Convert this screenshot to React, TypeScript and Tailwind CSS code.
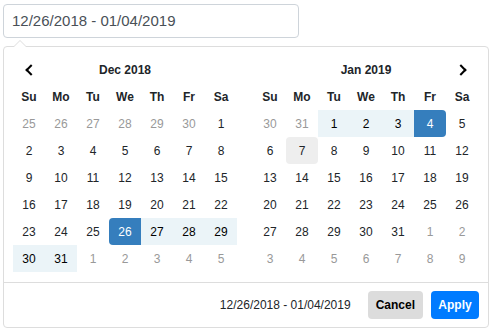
import React from "react";

type Day = { n: number; kind?: "off" | "in" | "start" | "end" | "hover" };

const dec: Day[][] = [
  [{ n: 25, kind: "off" }, { n: 26, kind: "off" }, { n: 27, kind: "off" }, { n: 28, kind: "off" }, { n: 29, kind: "off" }, { n: 30, kind: "off" }, { n: 1 }],
  [2, 3, 4, 5, 6, 7, 8].map((n) => ({ n })),
  [9, 10, 11, 12, 13, 14, 15].map((n) => ({ n })),
  [16, 17, 18, 19, 20, 21, 22].map((n) => ({ n })),
  [{ n: 23 }, { n: 24 }, { n: 25 }, { n: 26, kind: "start" }, { n: 27, kind: "in" }, { n: 28, kind: "in" }, { n: 29, kind: "in" }],
  [{ n: 30, kind: "in" }, { n: 31, kind: "in" }, { n: 1, kind: "off" }, { n: 2, kind: "off" }, { n: 3, kind: "off" }, { n: 4, kind: "off" }, { n: 5, kind: "off" }],
];

const jan: Day[][] = [
  [{ n: 30, kind: "off" }, { n: 31, kind: "off" }, { n: 1, kind: "in" }, { n: 2, kind: "in" }, { n: 3, kind: "in" }, { n: 4, kind: "end" }, { n: 5 }],
  [{ n: 6 }, { n: 7, kind: "hover" }, { n: 8 }, { n: 9 }, { n: 10 }, { n: 11 }, { n: 12 }],
  [13, 14, 15, 16, 17, 18, 19].map((n) => ({ n })),
  [20, 21, 22, 23, 24, 25, 26].map((n) => ({ n })),
  [{ n: 27 }, { n: 28 }, { n: 29 }, { n: 30 }, { n: 31 }, { n: 1, kind: "off" }, { n: 2, kind: "off" }],
  [3, 4, 5, 6, 7, 8, 9].map((n) => ({ n, kind: "off" as const })),
];

const weekdays = ["Su", "Mo", "Tu", "We", "Th", "Fr", "Sa"];

function cellClass(kind?: Day["kind"]) {
  switch (kind) {
    case "off":
      return "text-[#999]";
    case "in":
      return "bg-[#ebf4f8] text-black";
    case "start":
      return "bg-[#357ebd] text-white rounded-l-[4px]";
    case "end":
      return "bg-[#357ebd] text-white rounded-r-[4px]";
    case "hover":
      return "bg-[#eee] text-[#212529] rounded-[4px]";
    default:
      return "text-[#212529]";
  }
}

function Chevron({ dir }: { dir: "left" | "right" }) {
  return (
    <span
      className={
        "inline-block w-[8px] h-[8px] border-black border-r-[2px] border-b-[2px] " +
        (dir === "left" ? "rotate-[135deg] ml-[3px]" : "-rotate-45 mr-[3px]")
      }
    />
  );
}

function Calendar({ title, rows, prev, next }: { title: string; rows: Day[][]; prev?: boolean; next?: boolean }) {
  return (
    <div className="w-[224px]">
      <div className="grid grid-cols-7 h-[27px] items-center text-[12px] font-bold text-[#212529]">
        <div className="flex justify-center">{prev && <Chevron dir="left" />}</div>
        <div className="col-span-5 text-center">{title}</div>
        <div className="flex justify-center">{next && <Chevron dir="right" />}</div>
      </div>
      <div className="grid grid-cols-7 h-[27px] items-center text-[12px] font-bold text-[#212529]">
        {weekdays.map((w) => (
          <div key={w} className="text-center">{w}</div>
        ))}
      </div>
      {rows.map((row, i) => (
        <div key={i} className="grid grid-cols-7">
          {row.map((d, j) => (
            <div key={j} className={"h-[27px] flex items-center justify-center text-[12px] " + cellClass(d.kind)}>
              {d.n}
            </div>
          ))}
        </div>
      ))}
    </div>
  );
}

export default function App() {
  return (
    <div className="pl-[3px] pt-[4px] bg-white font-['Liberation_Sans',Arial,sans-serif]">
      <div className="w-[296px] h-[34px] border border-[#ced4da] rounded-[4px] flex items-center px-[8px] text-[15px] text-[#495057]">
        12/26/2018 - 01/04/2019
      </div>
      <div className="relative mt-[8px] w-[486px] border border-[#ddd] rounded-[4px] bg-white">
        <span className="absolute left-[9px] top-[-7px] w-0 h-0 border-x-[7px] border-b-[7px] border-x-transparent border-b-[#ddd]" />
        <span className="absolute left-[10px] top-[-6px] w-0 h-0 border-x-[6px] border-b-[6px] border-x-transparent border-b-white" />
        <div className="flex gap-[17px] pl-[9px] pt-[9px] pb-[10px]">
          <Calendar title="Dec 2018" rows={dec} prev />
          <Calendar title="Jan 2019" rows={jan} next />
        </div>
        <div className="border-t border-[#ddd] flex justify-end items-center p-[8px] pr-[9px] text-[12px]">
          <span className="text-[#212529] mr-[17px]">12/26/2018 - 01/04/2019</span>
          <button className="h-[28px] px-[8px] rounded-[4px] bg-[#dcdcdc] text-black font-bold mr-[8px]">Cancel</button>
          <button className="h-[28px] w-[48px] rounded-[4px] bg-[#007bff] text-white font-bold">Apply</button>
        </div>
      </div>
    </div>
  );
}
